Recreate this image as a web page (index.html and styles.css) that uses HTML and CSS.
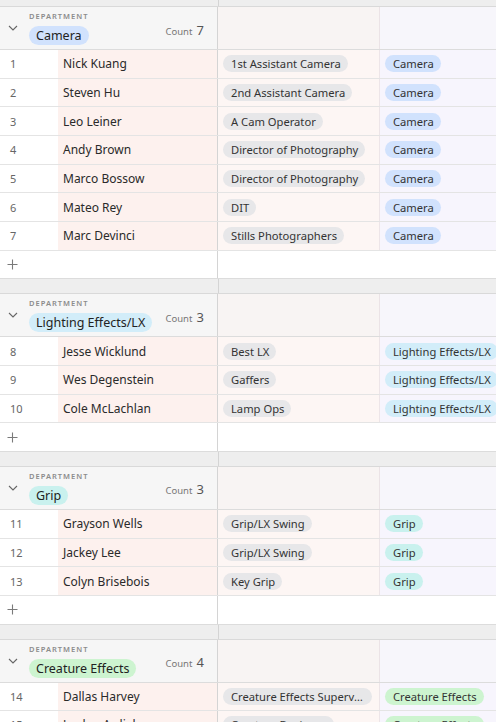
FILE: index.html
```html
<!DOCTYPE html>
<html>
<head>
<meta charset="utf-8">
<link rel="stylesheet" href="styles.css">
</head>
<body>
<div class="sheet">
  <div class="gap gap-top"><div class="gap-left"></div><div class="gap-right"></div></div>

  <section class="group">
    <div class="ghead">
      <div class="gmain">
        <svg class="chev" width="10" height="6" viewBox="0 0 10 6"><path d="M1 1 L5 5 L9 1" fill="none" stroke="#666" stroke-width="1.1"/></svg>
        <div class="ginfo">
          <div class="glabel">DEPARTMENT</div>
          <span class="gpill c-blue">Camera</span>
        </div>
        <div class="gcount"><span class="cl">Count</span> <span class="cn">7</span></div>
      </div>
      <div class="hrole"></div>
      <div class="hdept"></div>
    </div>
    <div class="row"><div class="num">1</div><div class="name">Nick Kuang</div><div class="role"><span class="pill c-grey">1st Assistant Camera</span></div><div class="dept"><span class="pill c-blue">Camera</span></div></div>
    <div class="row"><div class="num">2</div><div class="name">Steven Hu</div><div class="role"><span class="pill c-grey">2nd Assistant Camera</span></div><div class="dept"><span class="pill c-blue">Camera</span></div></div>
    <div class="row"><div class="num">3</div><div class="name">Leo Leiner</div><div class="role"><span class="pill c-grey">A Cam Operator</span></div><div class="dept"><span class="pill c-blue">Camera</span></div></div>
    <div class="row"><div class="num">4</div><div class="name">Andy Brown</div><div class="role"><span class="pill c-grey">Director of Photography</span></div><div class="dept"><span class="pill c-blue">Camera</span></div></div>
    <div class="row"><div class="num">5</div><div class="name">Marco Bossow</div><div class="role"><span class="pill c-grey">Director of Photography</span></div><div class="dept"><span class="pill c-blue">Camera</span></div></div>
    <div class="row"><div class="num">6</div><div class="name">Mateo Rey</div><div class="role"><span class="pill c-grey">DIT</span></div><div class="dept"><span class="pill c-blue">Camera</span></div></div>
    <div class="row"><div class="num">7</div><div class="name">Marc Devinci</div><div class="role"><span class="pill c-grey">Stills Photographers</span></div><div class="dept"><span class="pill c-blue">Camera</span></div></div>
    <div class="addrow"><div class="addmain"><svg width="11" height="11" viewBox="0 0 11 11"><path d="M5.5 0.5 V10.5 M0.5 5.5 H10.5" stroke="#7a7a7a" stroke-width="1.1" fill="none"/></svg></div><div class="addrest"></div></div>
  </section>

  <div class="gap"><div class="gap-left"></div><div class="gap-right"></div></div>

  <section class="group">
    <div class="ghead">
      <div class="gmain">
        <svg class="chev" width="10" height="6" viewBox="0 0 10 6"><path d="M1 1 L5 5 L9 1" fill="none" stroke="#666" stroke-width="1.1"/></svg>
        <div class="ginfo">
          <div class="glabel">DEPARTMENT</div>
          <span class="gpill c-cyan">Lighting Effects/LX</span>
        </div>
        <div class="gcount"><span class="cl">Count</span> <span class="cn">3</span></div>
      </div>
      <div class="hrole"></div>
      <div class="hdept"></div>
    </div>
    <div class="row"><div class="num">8</div><div class="name">Jesse Wicklund</div><div class="role"><span class="pill c-grey">Best LX</span></div><div class="dept"><span class="pill c-cyan">Lighting Effects/LX</span></div></div>
    <div class="row"><div class="num">9</div><div class="name">Wes Degenstein</div><div class="role"><span class="pill c-grey">Gaffers</span></div><div class="dept"><span class="pill c-cyan">Lighting Effects/LX</span></div></div>
    <div class="row"><div class="num">10</div><div class="name">Cole McLachlan</div><div class="role"><span class="pill c-grey">Lamp Ops</span></div><div class="dept"><span class="pill c-cyan">Lighting Effects/LX</span></div></div>
    <div class="addrow"><div class="addmain"><svg width="11" height="11" viewBox="0 0 11 11"><path d="M5.5 0.5 V10.5 M0.5 5.5 H10.5" stroke="#7a7a7a" stroke-width="1.1" fill="none"/></svg></div><div class="addrest"></div></div>
  </section>

  <div class="gap"><div class="gap-left"></div><div class="gap-right"></div></div>

  <section class="group">
    <div class="ghead">
      <div class="gmain">
        <svg class="chev" width="10" height="6" viewBox="0 0 10 6"><path d="M1 1 L5 5 L9 1" fill="none" stroke="#666" stroke-width="1.1"/></svg>
        <div class="ginfo">
          <div class="glabel">DEPARTMENT</div>
          <span class="gpill c-teal">Grip</span>
        </div>
        <div class="gcount"><span class="cl">Count</span> <span class="cn">3</span></div>
      </div>
      <div class="hrole"></div>
      <div class="hdept"></div>
    </div>
    <div class="row"><div class="num">11</div><div class="name">Grayson Wells</div><div class="role"><span class="pill c-grey">Grip/LX Swing</span></div><div class="dept"><span class="pill c-teal">Grip</span></div></div>
    <div class="row"><div class="num">12</div><div class="name">Jackey Lee</div><div class="role"><span class="pill c-grey">Grip/LX Swing</span></div><div class="dept"><span class="pill c-teal">Grip</span></div></div>
    <div class="row"><div class="num">13</div><div class="name">Colyn Brisebois</div><div class="role"><span class="pill c-grey">Key Grip</span></div><div class="dept"><span class="pill c-teal">Grip</span></div></div>
    <div class="addrow"><div class="addmain"><svg width="11" height="11" viewBox="0 0 11 11"><path d="M5.5 0.5 V10.5 M0.5 5.5 H10.5" stroke="#7a7a7a" stroke-width="1.1" fill="none"/></svg></div><div class="addrest"></div></div>
  </section>

  <div class="gap"><div class="gap-left"></div><div class="gap-right"></div></div>

  <section class="group">
    <div class="ghead">
      <div class="gmain">
        <svg class="chev" width="10" height="6" viewBox="0 0 10 6"><path d="M1 1 L5 5 L9 1" fill="none" stroke="#666" stroke-width="1.1"/></svg>
        <div class="ginfo">
          <div class="glabel">DEPARTMENT</div>
          <span class="gpill c-green">Creature Effects</span>
        </div>
        <div class="gcount"><span class="cl">Count</span> <span class="cn">4</span></div>
      </div>
      <div class="hrole"></div>
      <div class="hdept"></div>
    </div>
    <div class="row"><div class="num">14</div><div class="name">Dallas Harvey</div><div class="role"><span class="pill c-grey">Creature Effects Supervisor</span></div><div class="dept"><span class="pill c-green">Creature Effects</span></div></div>
    <div class="row"><div class="num">15</div><div class="name">Jordan Ardiel</div><div class="role"><span class="pill c-grey">Creature Designer</span></div><div class="dept"><span class="pill c-green">Creature Effects</span></div></div>
  </section>
</div>
</body>
</html>
```

FILE: styles.css
```css
html, body {
  margin: 0;
  padding: 0;
  background: #ffffff;
  overflow: hidden;
}
body {
  width: 496px;
  height: 722px;
  font-family: "Noto Sans", "Open Sans", sans-serif;
  color: #222;
}
.sheet {
  width: 640px;
}

/* gaps between groups */
.gap {
  display: flex;
  height: 15px;
  box-sizing: border-box;
  border-bottom: 1px solid #d9d9d9;
  background: #eeeeee;
}
.gap-top {
  height: 7px;
}
.gap-left {
  flex: 0 0 218px;
  border-right: 1px solid #d4d4d4;
}
.gap-right {
  flex: 1;
}

/* group header */
.ghead {
  display: flex;
  height: 43px;
  box-sizing: border-box;
  border-bottom: 1px solid #dcdcdc;
}
.gmain {
  flex: 0 0 218px;
  box-sizing: border-box;
  border-right: 1px solid #d4d4d4;
  background: #f6f6f6;
  display: flex;
  align-items: center;
  padding: 0 13px 0 8px;
}
.chev {
  flex: 0 0 auto;
  margin-right: 11px;
}
.ginfo {
  flex: 1;
  display: flex;
  flex-direction: column;
  align-items: flex-start;
  padding-top: 0;
}
.glabel {
  font-size: 7.5px;
  line-height: 10px;
  letter-spacing: 1px;
  color: #8c8c8c;
  font-weight: 600;
  margin-bottom: 5px;
}
.gpill {
  display: inline-block;
  height: 19px;
  line-height: 19px;
  padding: 0 7px;
  border-radius: 10px;
  font-size: 12.5px;
  color: #222;
}
.gcount {
  flex: 0 0 auto;
  align-self: center;
  margin-top: 1px;
  color: #777;
  white-space: nowrap;
}
.gcount .cl {
  font-size: 9.5px;
}
.gcount .cn {
  font-size: 13px;
  color: #555;
}
.hrole {
  flex: 0 0 162px;
  box-sizing: border-box;
  border-right: 1px solid #ebe3e6;
  background: #f8f4f3;
}
.hdept {
  flex: 1;
  background: #f7f6fb;
}

/* data rows */
.row {
  display: flex;
  height: 28.67px;
  box-sizing: border-box;
  border-bottom: 1px solid #e4e4e4;
  font-size: 12px;
  align-items: stretch;
}
.num {
  flex: 0 0 58px;
  box-sizing: border-box;
  padding-left: 10px;
  font-size: 11px;
  color: #666;
  display: flex;
  align-items: center;
  background: #ffffff;
}
.name {
  flex: 0 0 160px;
  box-sizing: border-box;
  padding-left: 5px;
  border-right: 1px solid #d4d4d4;
  background: #fdf1ee;
  color: #2a2a2a;
  display: flex;
  align-items: center;
  white-space: nowrap;
}
.role {
  flex: 0 0 162px;
  box-sizing: border-box;
  padding: 0 7px 0 5px;
  border-right: 1px solid #ede5e8;
  background: #fdf6f4;
  display: flex;
  align-items: center;
  min-width: 0;
}
.dept {
  flex: 1;
  box-sizing: border-box;
  padding-left: 5px;
  background: #f7f5fd;
  display: flex;
  align-items: center;
}
.pill {
  display: inline-block;
  height: 17px;
  line-height: 17px;
  padding: 0 7px 0 8px;
  border-radius: 9px;
  font-size: 11.2px;
  color: #333;
  white-space: nowrap;
  overflow: hidden;
  text-overflow: ellipsis;
  max-width: 100%;
  box-sizing: border-box;
}
.c-grey { background: #e7e7e9; }
.c-blue { background: #d1e2fd; }
.c-cyan { background: #d2edf9; }
.c-teal { background: #c9f1ee; }
.c-green { background: #cdf4d0; }

/* add row */
.addrow {
  display: flex;
  height: 28.67px;
  box-sizing: border-box;
  border-bottom: 1px solid #dcdcdc;
}
.addmain {
  flex: 0 0 218px;
  box-sizing: border-box;
  border-right: 1px solid #d4d4d4;
  padding-left: 7px;
  display: flex;
  align-items: center;
}
.addmain svg {
  display: block;
}
.addrest {
  flex: 1;
}
```
